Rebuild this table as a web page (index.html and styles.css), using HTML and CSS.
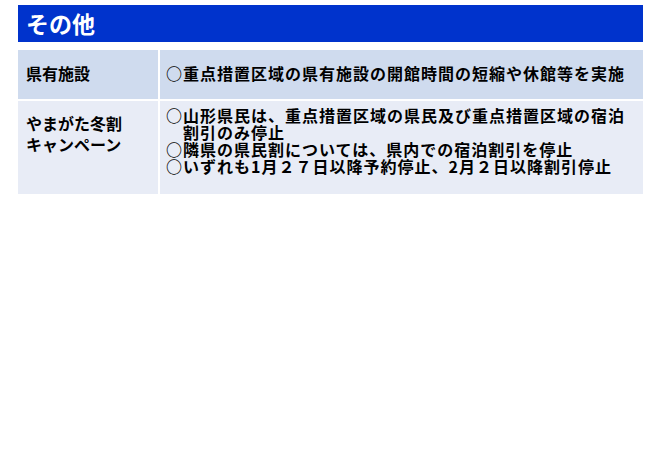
FILE: index.html
```html
<!DOCTYPE html>
<html lang="ja">
<head>
    <meta charset="UTF-8">
    <meta name="viewport" content="width=device-width, initial-scale=1.0">
    <title>その他</title>
    <link rel="stylesheet" href="styles.css">
</head>
<body>

<div class="slide">
    <!-- 見出し -->
    <h1 class="title">その他</h1>

    <!-- 項目の表 -->
    <table class="items">
        <tr class="row-dark">
            <th>県有施設</th>
            <td>
                <p class="point">○重点措置区域の県有施設の開館時間の短縮や休館等を実施</p>
            </td>
        </tr>
        <tr class="row-light">
            <th>やまがた冬割<br>キャンペーン</th>
            <td>
                <p class="point">○山形県民は、重点措置区域の県民及び重点措置区域の宿泊割引のみ停止</p>
                <p class="point">○隣県の県民割については、県内での宿泊割引を停止</p>
                <p class="point">○いずれも1月２７日以降予約停止、2月２日以降割引停止</p>
            </td>
        </tr>
    </table>
</div>

</body>
</html>
```

FILE: styles.css
```css
body {
    margin: 0;
    background-color: #fff;
    font-family: "Noto Sans CJK JP", "Noto Sans", sans-serif;
    color: #000;
}
.slide {
    width: 625px;
    padding: 5px 0 0 18px;
}
.title {
    margin: 0;
    height: 37px;
    padding-left: 8px;
    background-color: #0033cc;
    color: #fff;
    font-size: 23px;
    font-weight: bold;
    line-height: 37px;
}
.items {
    width: 625px;
    margin-top: 8px;
    border-collapse: collapse;
}
.items th, .items td {
    border: 2px solid #fff;
    font-size: 16px;
    font-weight: bold;
    text-align: left;
    vertical-align: top;
}
.items tr:first-child th, .items tr:first-child td {
    border-top: none;
}
.items tr:last-child th, .items tr:last-child td {
    border-bottom: none;
}
.items th:first-child {
    border-left: none;
}
.items td:last-child {
    border-right: none;
}
.items th {
    width: 126px;
    padding: 0 6px 0 8px;
    line-height: 21px;
}
.items td {
    padding: 0 4px 0 6px;
    line-height: 17px;
    letter-spacing: 1px;
}
.row-dark th, .row-dark td {
    height: 46px;
    padding-bottom: 3px;
    vertical-align: middle;
    background-color: #cfdbee;
}
.row-light th, .row-light td {
    background-color: #e8ecf6;
}
.row-light th {
    padding-top: 12px;
    height: 81px;
}
.row-light td {
    padding-top: 6px;
    height: 87px;
}
.point {
    margin: 0;
    padding-left: 17px;
    text-indent: -17px;
}
```
